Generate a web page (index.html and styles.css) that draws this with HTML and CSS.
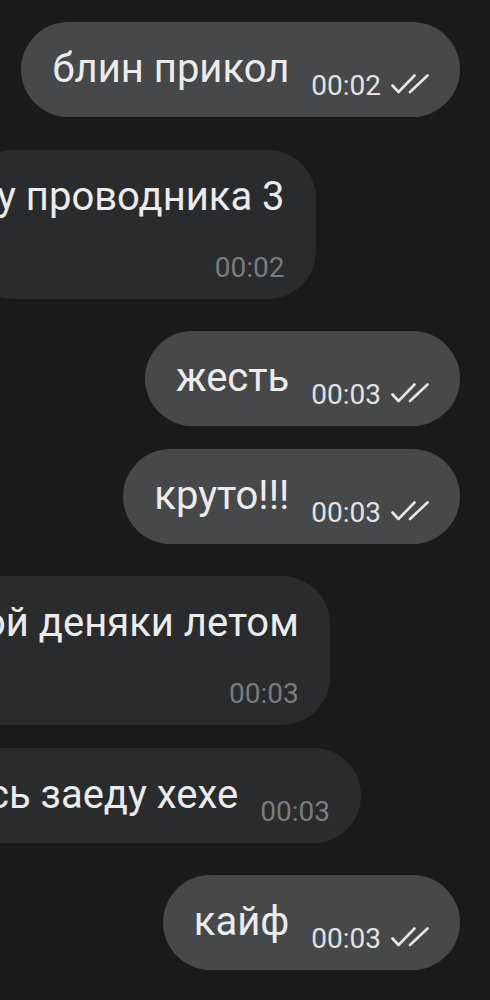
FILE: index.html
```html
<!DOCTYPE html>
<html lang="ru">
<head>
  <meta charset="UTF-8" />
  <meta name="viewport" content="width=device-width, initial-scale=1.0"/>
  <title>Чат</title>
  <link rel="stylesheet" href="styles.css">
</head>
<body>
  <div class="chat">

    <div class="row out">
      <div class="bubble">
        <span class="text">блин прикол</span>
        <span class="meta">00:02
          <svg class="checks" viewBox="0 0 40 20" width="40" height="20"><path d="M2.5 11.5 L8.5 18 L24.5 1.5 M20 18 L37.5 1.5"/></svg>
        </span>
      </div>
    </div>

    <div class="row in">
      <div class="bubble stacked b-prov">
        <span class="text">у проводника 3</span>
        <span class="meta">00:02</span>
      </div>
    </div>

    <div class="row out">
      <div class="bubble">
        <span class="text">жесть</span>
        <span class="meta">00:03
          <svg class="checks" viewBox="0 0 40 20" width="40" height="20"><path d="M2.5 11.5 L8.5 18 L24.5 1.5 M20 18 L37.5 1.5"/></svg>
        </span>
      </div>
    </div>

    <div class="row out same">
      <div class="bubble">
        <span class="text">круто!!!</span>
        <span class="meta">00:03
          <svg class="checks" viewBox="0 0 40 20" width="40" height="20"><path d="M2.5 11.5 L8.5 18 L24.5 1.5 M20 18 L37.5 1.5"/></svg>
        </span>
      </div>
    </div>

    <div class="row in">
      <div class="bubble stacked b-money">
        <span class="text">ой деняки летом</span>
        <span class="meta">00:03</span>
      </div>
    </div>

    <div class="row in same">
      <div class="bubble b-hehe">
        <span class="text">сь заеду хехе</span>
        <span class="meta">00:03</span>
      </div>
    </div>

    <div class="row out">
      <div class="bubble">
        <span class="text">кайф</span>
        <span class="meta">00:03
          <svg class="checks" viewBox="0 0 40 20" width="40" height="20"><path d="M2.5 11.5 L8.5 18 L24.5 1.5 M20 18 L37.5 1.5"/></svg>
        </span>
      </div>
    </div>

  </div>
</body>
</html>
```

FILE: styles.css
```css
html, body {
  margin: 0;
  padding: 0;
  background: #1a1a1b;
  overflow: hidden;
}

body {
  font-family: Roboto, "Noto Sans", sans-serif;
  color: #ececec;
  width: 490px;
  height: 1000px;
}

.chat {
  padding: 22px 30px 0 0;
}

.row {
  display: flex;
  margin-top: 32.5px;
}

.row:first-child {
  margin-top: 0;
}

.row.same {
  margin-top: 22.5px;
}

.row.out {
  justify-content: flex-end;
}

.row.in {
  justify-content: flex-start;
}

.bubble {
  display: flex;
  align-items: flex-end;
  padding: 24px 30px 17px 31px;
  border-radius: 48px;
  flex-shrink: 0;
}

.out .bubble {
  background: #47484a;
}

.in .bubble {
  background: #2a2b2d;
  padding-right: 31px;
}

.text {
  font-size: 40px;
  line-height: 46px;
  margin-bottom: 8px;
  white-space: nowrap;
}

.meta {
  display: flex;
  align-items: center;
  font-size: 28px;
  line-height: 28px;
  margin-left: 22px;
  white-space: nowrap;
  color: #e2e2e2;
}

.in .meta {
  color: #7b7b7c;
}

.checks {
  margin-left: 9px;
  margin-top: -4px;
  fill: none;
  stroke: #e6e6e6;
  stroke-width: 2.6;
  stroke-linecap: round;
  stroke-linejoin: round;
}

.bubble.stacked {
  flex-direction: column;
  align-items: flex-end;
}

.stacked .text {
  margin-bottom: 0;
}

.stacked .meta {
  margin-top: 34px;
  margin-left: 0;
}

.b-prov {
  margin-left: -34px;
}

.b-money {
  margin-left: -48px;
}

.b-hehe {
  margin-left: -43px;
}
```
